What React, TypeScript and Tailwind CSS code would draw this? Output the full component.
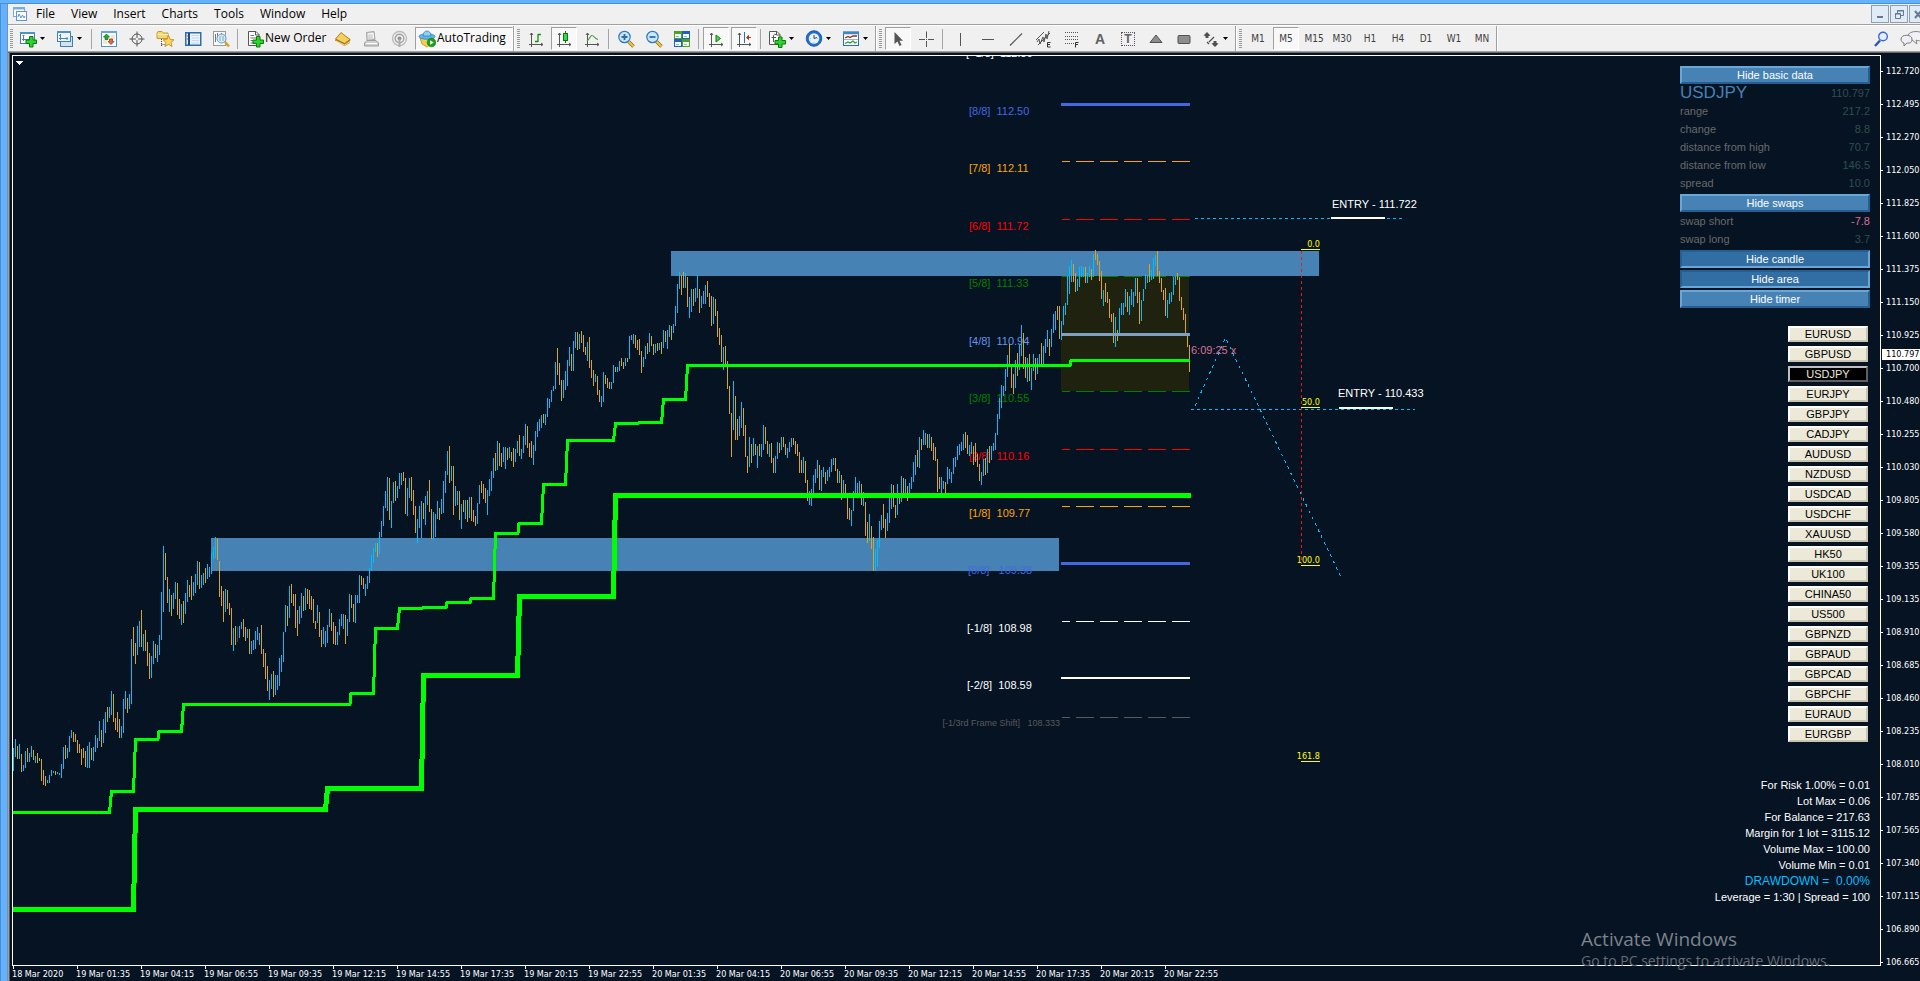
import type { ReactNode } from 'react';

/* ------------------------------------------------------------------ */
/* Chart data                                                          */
/* ------------------------------------------------------------------ */

// Bars are two pixels apart. Each entry is "top-bottom" in thirds of a pixel
// below the segment base, followed by u (up), d (down) or n (neutral).
type Segment = { x: number; base: number; bars: string };

const SEGMENTS: Segment[] = [
  {
    x: 13,
    base: 460,
    bars: `864-933u 837-891u 858-897d 852-897u 882-936d 915-933u 873-924u 864-906d 879-906u 858-891u 870-900d 888-909u
    879-909d 894-903d 897-963d 930-975d 948-978d 960-969u 945-969u 930-948u 933-939u 933-945d 936-942u 939-945u 912-954u
    861-927u 855-897d 864-894u 828-876u 810-834u 816-846d 822-846d 840-879d 852-879d 867-915d 864-894d 873-921d 858-924u
    846-924u 864-900d 861-903u 825-876u 834-864u 783-843u 810-861d 777-849u 756-819u 741-786d 741-774u 693-765u 702-786d
    774-810d 756-816d 777-834d 798-834u 717-819u 693-747u 714-759d 702-747u 537-732u 501-588d 549-612d 498-585u 483-561u
    450-561d 522-573u 510-573d 546-618d 579-657d 588-654u 543-612u 552-594d 555-606u 525-585u 396-540u 258-456u 279-360d
    351-429d 387-456u 405-468d 399-447u 366-417u 369-465d 417-477d 432-495u 423-489d 399-462u 360-426u 375-411d 348-420d
    366-408u 342-399u 303-375u 306-387d 345-384u 339-375u 324-369d 312-357u 321-351u 279-342u 261-297u 231-294u 234-300d
    303-411d 378-438d 393-486d 387-456u 390-447d 429-465d 444-555d 504-573u 498-555d 501-546n 498-534u 486-507u 477-531d
    501-543d 507-534u 507-582d 543-582u 540-570u 513-567u 501-540u 519-555u 495-582d 567-621d 579-657d 618-693d 660-720u
    642-687u 633-711d 645-705u 645-690u 594-678u 585-636u 516-606u 435-516u 438-498d 378-474u 372-429d 402-438d 402-504d
    450-528d 438-492u 399-474u 408-453d 384-450u 387-432d 390-447d 408-450d 417-489d 483-507d 435-489u 456-531d 510-561d
    501-552u 513-561u 495-549u 447-501u 459-513d 486-552d 498-555d 516-555u 477-525u 462-498u 462-507u 465-552d 477-528u
    402-486u 405-444d 432-486d 405-489u 405-429u 345-429u 348-375d 354-387d 372-408u 348-387u 324-369u 285-333u 264-309u
    249-276u 249-291d 216-282u 183-231u 138-198u 93-144u 51-153u 54-180d 123-204u 66-129u 63-123d 78-114u 39-87u 39-75u
    36-63d 54-162d 84-168u 54-114u 51-123d 90-165d 138-219d 177-249u 138-204u 123-234u 129-177d 108-195u 93-135u 60-156d
    147-237d 156-240u 162-231u 123-177u 144-180d 117-162u 63-159u 33-99u`,
  },
  {
    x: 447,
    base: 400,
    bars: `153-225u 138-249d 198-243u 198-345d 258-318u 273-315u 273-360d 312-387u 300-336d 300-357u 300-366d 291-354u
    291-363d 330-366d 348-378d 309-372u 255-312u 243-279d 252-297d 264-309d 270-345u 237-288u 213-273u 174-234u 159-213d
    123-210u 129-198d 159-201d 141-186u 141-207u 144-180d 141-174u 156-183d 144-201d 147-186u 123-159u 105-168d 147-177u
    108-159u 72-135u 78-144d 129-171d 123-174d 135-195u 93-153u 66-111u 57-93u`,
  },
  {
    x: 541,
    base: 230,
    bars: `555-594u 552-579d 552-585u 504-561u 507-534u 480-516u 468-483u 396-477u 354-435d 399-465d 450-513d 450-504u
    423-480u 390-468u 351-408u 372-423d 333-423u 306-354u 306-360d 312-357u 303-339d 315-366d 351-375d 336-393u 321-414d
    390-444d 420-468d 432-456u 438-495d 480-516d 498-531u 426-516u 435-462d 444-474d 456-477d 456-477u 405-459u 411-426d
    411-426u 393-423u 384-408d 396-417d 384-408u 384-396d 318-387u 315-330u 312-342u 315-354d 330-360d 327-375d 363-429d
    381-411u 348-387u 339-372d 309-366u 318-348d 342-375d 342-369u 339-363d 339-360u 336-372d 300-354u 303-336d 300-357u
    285-321u 288-330d 282-309u 228-288u 162-249u 126-177u 135-195d 126-174d 129-174u 141-231d 201-264u 177-246u 177-228d
    174-216u 135-204u 177-249d 198-234u 183-222u 165-222u 153-201d 189-231d 198-288d 201-282u 207-258d 243-321d 294-345d
    315-396d 351-420u 348-405d 393-477d 468-552d 549-681d 453-600u 498-630d 567-630d 558-618u 516-594u 534-618d 585-681d
    678-729d 621-711u 642-699d 624-678u 642-675d 648-714u 642-678d 642-681u 585-660u 591-642d 633-672d 642-681u 639-699d
    684-729d 678-729u 636-687u 639-669d 621-660u 621-651d 642-675d 654-684u 636-666u 624-651u 624-645d 633-672d 642-678d
    666-729d 690-729d 681-729u 693-759d 750-813d 783-825u 777-828u 735-789u 717-759u 690-744u 705-780d 720-783u 711-741u
    726-762d 720-753u 711-741u 687-726u 684-705u 684-723d 717-759d 723-759u 735-810d 750-792u 762-804d 795-867d 834-870d
    840-888u 783-843u 741-789u 759-789u 753-792u 762-825d 786-828u 816-918d 876-939d 852-933u 888-957d 921-1023d 957-1023u
    930-1011u 873-954u 855-900u 822-894d 867-924d 849-903u 798-879u 762-837u 765-831d 825-864d 762-855u 789-822d 738-816u
    744-789d 747-801u 768-813d 759-804u 741-777u 696-756u 675-735u 660-711d 621-714u 627-660d 600-645u 609-645u 612-654d
    612-654u 621-663d 639-690d 651-693d 687-786d 741-777d 741-789u 753-777u 756-789d 711-762u 717-747u 726-759u 684-732u
    681-711u 648-690u 642-675u 636-663u 612-660u 606-654d 615-672d 645-678u 636-672u 648-705d 639-696d 672-711d 702-753d
    726-765u 687-738u 684-735d 657-729u 648-699d 648-690u 639-663u 609-660u 552-615u 504-567u`,
  },
  {
    x: 1001,
    base: 40,
    bars: `1035-1104u 1038-1068u 987-1053u 945-1011u 912-978d 981-1044d 1002-1062d 960-1044u 939-1008d 915-990u 855-948u
    879-987d 951-1014d 954-1026u 942-1023d 984-1050u 942-993u 954-1020d 954-1002u 942-975u 909-978d 918-972u 897-939u
    870-921u 897-948d 867-921u 822-879u 813-870u 798-840d 798-897d 843-900u 798-855u 789-825u 708-795u 678-762u 660-726u
    672-726d 699-756d 717-753u 681-741u 678-711u 681-711u 681-729d 699-729u 678-711u 687-720d 642-711u 630-660d 642-675d
    663-723d 693-777d 750-798u 729-786d 756-789d 777-834d 822-846d 819-909d 831-921u 870-903d 804-879u 789-825u 789-825u
    747-801u 756-816d 768-825u 747-795u 756-801u 714-768u 714-789d 756-852d 780-843u 747-783u 702-747u 705-729u 672-726d
    690-720u 654-717u 645-678u 633-708d 693-729d 714-756d 750-780d 744-828d 780-834u 759-792u 756-786u 711-765u 708-735u
    699-720d 711-783d 771-810d 804-840d 822-888d 885-921d 915-996d`,
  },
];

function barPath(kind: string) {
  let d = '';
  for (const seg of SEGMENTS) {
    seg.bars.split(/\s+/).forEach((bar, i) => {
      if (!bar.endsWith(kind)) return;
      const [top, bottom] = bar.slice(0, -1).split('-').map(Number);
      d += `M${seg.x + i * 2 + 0.5} ${seg.base + top / 3}V${seg.base + bottom / 3}`;
    });
  }
  return d;
}

const FAST_LINE =
  '13,812.5 109.5,812.5 111.5,791.5 133.5,791.5 135.5,739.5 158,739.5 159,731.5 181.5,731.5 183.5,704.5 350,704.5 351,693.5 373.5,693.5 375.5,628.5 397.5,628.5 399.5,608.5 422,608.5 423,607.5 446,607.5 447,602.5 470,602.5 471,598.5 493.5,598.5 495.5,533.5 518,533.5 519,523.5 541.5,523.5 543.5,484.5 565.5,484.5 567.5,440.5 613.5,440.5 615.5,423.5 638,423.5 639,422.5 661.5,422.5 663.5,399.5 685.5,399.5 687.5,365.5 1070,365.5 1071,360.5 1190,360.5';

const SLOW_LINE =
  '13,909.5 133.5,909.5 135.5,809.5 325.5,809.5 327.5,788.5 421.5,788.5 423.5,675.5 517.5,675.5 519.5,596.5 613.5,596.5 615.5,495.5 1191,495.5';

type Level = { label: string; x: number; y: number; textY: number; color: string; width?: number };

const LEVELS: Level[] = [
  { label: '[+1/8]  112.89', x: 966, y: 40, textY: 57, color: '#ffffff' },
  { label: '[8/8]  112.50', x: 969, y: 104.5, textY: 115, color: '#4169e1', width: 3 },
  { label: '[7/8]  112.11', x: 969, y: 161.5, textY: 172, color: '#ffa500' },
  { label: '[6/8]  111.72', x: 969, y: 219.5, textY: 230, color: '#ff0000' },
  { label: '[5/8]  111.33', x: 969, y: 276.5, textY: 287, color: '#008000' },
  { label: '[4/8]  110.94', x: 969, y: 334.5, textY: 345, color: '#6495ed', width: 3 },
  { label: '[3/8]  110.55', x: 969, y: 391.5, textY: 402, color: '#008000' },
  { label: '[2/8]  110.16', x: 969, y: 449.5, textY: 460, color: '#ff0000' },
  { label: '[1/8]  109.77', x: 969, y: 506.5, textY: 517, color: '#ffa500' },
  { label: '[0/8]   109.38', x: 968, y: 563.5, textY: 574, color: '#4169e1', width: 3 },
  { label: '[-1/8]  108.98', x: 967, y: 621.5, textY: 632, color: '#ffffff' },
  { label: '[-2/8]  108.59', x: 967, y: 678, textY: 689, color: '#ffffff', width: 2 },
];

const FIBS = [
  { label: '0.0', y: 249 },
  { label: '50.0', y: 407 },
  { label: '100.0', y: 565 },
  { label: '161.8', y: 761 },
];

function Chart() {
  return (
    <svg className="absolute inset-0 h-full w-full" role="img" aria-label="USDJPY M5 chart">
      <g transform="translate(-13 -56)" shapeRendering="crispEdges" fill="none">
        <rect x="211" y="538" width="848" height="33" fill="#4682b4" />
        <g fontFamily="'Liberation Sans', Arial, sans-serif" fontSize="11" style={{ whiteSpace: 'pre' }}>
          {LEVELS.map((l) => (
            <text key={l.label} x={l.x} y={l.textY} fill={l.color} xmlSpace="preserve">
              {l.label}
            </text>
          ))}
          <text x="1060" y="726" textAnchor="end" fontSize="9" fill="#5a5a5a" xmlSpace="preserve">
            {'[-1/3rd Frame Shift]   108.333'}
          </text>
        </g>
        <rect x="671" y="251" width="648" height="25" fill="#4682b4" />
        <rect x="1061" y="276" width="128" height="115" fill="#1f220e" />
        {LEVELS.slice(1).map((l) => (
          <line
            key={l.label}
            x1={l.width ? 1061 : 1062}
            x2="1190"
            y1={l.y}
            y2={l.y}
            stroke={l.color}
            strokeWidth={l.width ?? 1}
            strokeDasharray={l.width ? undefined : '18 6'}
            strokeDashoffset={l.width ? undefined : 10}
          />
        ))}
        <line x1="1062" x2="1190" y1="717.5" y2="717.5" stroke="#5a5a5a" strokeDasharray="18 6" strokeDashoffset="10" />
        <path d={barPath('u')} stroke="#00bfff" />
        <path d={barPath('d')} stroke="#daa520" />
        <path d={barPath('n')} stroke="#2f4f4f" />
        <line x1="1061" x2="1189" y1="334.5" y2="334.5" stroke="#7f9fc4" strokeWidth="3" />
        <polyline points={FAST_LINE} stroke="#00ff00" strokeWidth="3" />
        <polyline points={SLOW_LINE} stroke="#00ff00" strokeWidth="5" />

        <g stroke="#00bfff">
          <path d="M1195 218.5H1402M1191 409.5H1415" strokeDasharray="3 3" />
          <path d="M1195 406L1225.5 338L1341.5 578" strokeDasharray="3 4" />
        </g>
        <path d="M1301.5 251V564" stroke="#ff1010" strokeDasharray="3 3" />
        <path d="M1331 218H1385M1339 408H1393" stroke="#ffffff" strokeWidth="2" />
        <g fontFamily="'Liberation Sans', Arial, sans-serif" fontSize="11" fill="#ffffff">
          <text x="1332" y="208">ENTRY - 111.722</text>
          <text x="1338" y="397">ENTRY - 110.433</text>
          <text x="1191" y="354" fill="#db7093">6:09:25 x</text>
        </g>
        <g fontFamily="'DejaVu Sans Condensed', 'DejaVu Sans', sans-serif" fontSize="9" fill="#ffff00">
          {FIBS.map((f) => (
            <g key={f.label}>
              <text x="1320" y={f.y - 2} textAnchor="end">
                {f.label}
              </text>
              <path d={`M1301 ${f.y + 0.5}H1320`} stroke="#ffff00" />
            </g>
          ))}
        </g>
        <path d="M16 61H23L19.5 65Z" fill="#ffffff" />
      </g>
    </svg>
  );
}

/* ------------------------------------------------------------------ */
/* Chart overlays                                                      */
/* ------------------------------------------------------------------ */

function PanelButton({ children, pressed }: { children: ReactNode; pressed?: boolean }) {
  return (
    <button
      aria-pressed={pressed}
      className={
        'flex h-[18px] w-full shrink-0 items-center justify-center border-2 text-[11px] leading-none text-white ' +
        (pressed
          ? 'border-t-[#255f92] border-r-[#6aa6d8] border-b-[#6aa6d8] border-l-[#255f92] bg-[#316ea3]'
          : 'border-t-[#6aa6d8] border-r-[#255f92] border-b-[#255f92] border-l-[#6aa6d8] bg-[#4682b4]')
      }
    >
      {children}
    </button>
  );
}

function DataRow({ label, value, red }: { label: string; value: string; red?: boolean }) {
  return (
    <div className="flex h-[18px] items-center justify-between">
      <span className="text-[#696969]">{label}</span>
      <span className={red ? 'text-[#db7093]' : 'text-[#2f4f4f]'}>{value}</span>
    </div>
  );
}

const SYMBOLS = [
  'EURUSD', 'GBPUSD', 'USDJPY', 'EURJPY', 'GBPJPY', 'CADJPY', 'AUDUSD', 'NZDUSD', 'USDCAD', 'USDCHF', 'XAUUSD',
  'HK50', 'UK100', 'CHINA50', 'US500', 'GBPNZD', 'GBPAUD', 'GBPCAD', 'GBPCHF', 'EURAUD', 'EURGBP',
];

function SidePanel() {
  return (
    <div className="relative ml-auto mr-2.5 flex w-[190px] flex-col pt-2.5 text-[11px] leading-none">
      <PanelButton>Hide basic data</PanelButton>
      <div className="flex h-[18px] items-center justify-between">
        <span className="text-[17px] leading-[22px] text-[#4682b4]">USDJPY</span>
        <span className="text-[#2f4f4f]">110.797</span>
      </div>
      <DataRow label="range" value="217.2" />
      <DataRow label="change" value="8.8" />
      <DataRow label="distance from high" value="70.7" />
      <DataRow label="distance from low" value="146.5" />
      <DataRow label="spread" value="10.0" />
      <div className="mt-0.5">
        <PanelButton>Hide swaps</PanelButton>
      </div>
      <DataRow label="swap short" value="-7.8" red />
      <DataRow label="swap long" value="3.7" />
      <div className="mt-0.5 flex flex-col gap-0.5">
        <PanelButton pressed>Hide candle</PanelButton>
        <PanelButton pressed>Hide area</PanelButton>
        <PanelButton>Hide timer</PanelButton>
      </div>
      <div className="mr-0.5 mt-[18px] flex w-20 flex-col gap-1 self-end">
        {SYMBOLS.map((s) => (
          <button
            key={s}
            className={
              'flex h-4 shrink-0 items-center justify-center border-2 text-[11px] leading-none ' +
              (s === 'USDJPY'
                ? 'border-t-[#c0c0c0] border-r-[#606060] border-b-[#606060] border-l-[#c0c0c0] bg-black text-[#ece9d8]'
                : 'border-t-white border-r-[#c8c5b2] border-b-[#c8c5b2] border-l-white bg-[#ece9d8] text-black')
            }
          >
            {s}
          </button>
        ))}
      </div>
      <div className="mt-[35px] flex flex-col items-end whitespace-pre text-[11px] leading-4 text-white">
        <p>For Risk 1.00% = 0.01</p>
        <p>Lot Max = 0.06</p>
        <p>For Balance = 217.63</p>
        <p>Margin for 1 lot = 3115.12</p>
        <p>Volume Max = 100.00</p>
        <p>Volume Min = 0.01</p>
        <p className="text-xs leading-4 text-[#00bfff]">{'DRAWDOWN =  0.00%'}</p>
        <p>Leverage = 1:30 | Spread = 100</p>
      </div>
    </div>
  );
}

/* ------------------------------------------------------------------ */
/* Axes                                                                */
/* ------------------------------------------------------------------ */

const PRICES = [
  '112.720', '112.495', '112.270', '112.050', '111.825', '111.600', '111.375', '111.150', '110.925', '110.700',
  '110.480', '110.255', '110.030', '109.805', '109.580', '109.355', '109.135', '108.910', '108.685', '108.460',
  '108.235', '108.010', '107.785', '107.565', '107.340', '107.115', '106.890', '106.665',
];

const TIMES = [
  '18 Mar 2020', '19 Mar 01:35', '19 Mar 04:15', '19 Mar 06:55', '19 Mar 09:35', '19 Mar 12:15', '19 Mar 14:55',
  '19 Mar 17:35', '19 Mar 20:15', '19 Mar 22:55', '20 Mar 01:35', '20 Mar 04:15', '20 Mar 06:55', '20 Mar 09:35',
  '20 Mar 12:15', '20 Mar 14:55', '20 Mar 17:35', '20 Mar 20:15', '20 Mar 22:55',
];

function PriceAxis() {
  return (
    <div className="relative flex w-[39px] shrink-0 flex-col overflow-hidden font-['DejaVu_Sans_Condensed','DejaVu_Sans',sans-serif] text-[9px] leading-none text-white">
      {PRICES.map((p) => (
        <div key={p} className="flex h-[33px] shrink-0 items-center gap-[3px]">
          <span className="h-px w-0.5 bg-white" />
          {p}
        </div>
      ))}
      <div className="absolute inset-x-0 top-[294px] ml-px flex h-[11px] items-center bg-white pl-1 text-black">
        110.797
      </div>
    </div>
  );
}

function TimeAxis() {
  return (
    <div className="flex h-[15px] shrink-0 overflow-hidden pl-px font-['DejaVu_Sans_Condensed','DejaVu_Sans',sans-serif] text-[9px] leading-none text-white">
      {TIMES.map((t) => (
        <div key={t} className="flex w-16 shrink-0 flex-col whitespace-nowrap">
          <span className="h-[3px] w-px bg-white" />
          <span className="-ml-px pt-px">{t}</span>
        </div>
      ))}
    </div>
  );
}

/* ------------------------------------------------------------------ */
/* Toolbar                                                             */
/* ------------------------------------------------------------------ */

function Icon({ children }: { children: ReactNode }) {
  return (
    <svg width="18" height="18" viewBox="0 0 18 18" fill="none" className="shrink-0" aria-hidden="true">
      {children}
    </svg>
  );
}

function Tool({ label, pressed, children }: { label: string; pressed?: boolean; children: ReactNode }) {
  return (
    <button aria-label={label} title={label} className="flex h-[23px] w-7 shrink-0 items-center justify-center px-px">
      <span
        className={
          'flex h-full w-full items-center justify-center border ' +
          (pressed ? 'border-t-[#a0a0a0] border-r-white border-b-white border-l-[#a0a0a0] bg-[#f8f8f8]' : 'border-transparent')
        }
      >
        {children}
      </span>
    </button>
  );
}

function MenuTool({ label, children }: { label: string; children: ReactNode }) {
  return (
    <button aria-label={label} className="flex h-[23px] w-[37px] shrink-0 items-center gap-[3px] pl-1">
      {children}
      <svg width="5" height="3" viewBox="0 0 5 3" className="shrink-0" aria-hidden="true">
        <path d="M0 0H5L2.5 3Z" fill="#000" />
      </svg>
    </button>
  );
}

const Sep = () => <span className="ml-0.5 mr-[3px] h-5 w-px shrink-0 bg-[#a5a5a5]" />;

const BandEnd = () => <span className="h-full w-0.5 shrink-0 border-r border-white bg-[#a0a0a0]" />;

const Grip = () => (
  <svg width="3" height="20" viewBox="0 0 3 20" className="mx-0.5 shrink-0" aria-hidden="true">
    <path d="M1.5 0V20" stroke="#9a9a9a" strokeWidth="3" strokeDasharray="1 1" />
  </svg>
);

const Plus = () => (
  <path d="M10.5 7.5H14V11H17.5V14.5H14V18H10.5V14.5H7V11H10.5Z" fill="#2bd52b" stroke="#0b7a0b" strokeWidth="1" />
);

const Axes = () => (
  <path d="M4.5 3V17M2 14.5H16M3 5L4.5 3L6 5M14 13L16 14.5L14 16" stroke="#555" strokeWidth="1" />
);

function Toolbar() {
  return (
    <div className="flex h-[26px] shrink-0 items-center border-t border-white bg-[#f0f0f0] text-xs text-black">
      <Grip />
      <MenuTool label="New Chart">
        <Icon>
          <rect x="1.5" y="2.5" width="14" height="11" fill="#fff" stroke="#3f7fb5" />
          <path d="M1 3H16" stroke="#4b93cf" strokeWidth="2" />
          <path d="M4.5 5V11M3 9.5H10M3.500 6L4.5 5L5.500 6" stroke="#5580a8" />
          <g transform="translate(0 -1)"><Plus /></g>
        </Icon>
      </MenuTool>
      <MenuTool label="Profiles">
        <Icon>
          <rect x="4.500" y="6.500" width="12" height="10" fill="#cfe5f7" stroke="#3f7fb5" />
          <rect x="1.500" y="1.500" width="13" height="10" fill="#eef7ff" stroke="#3f7fb5" />
          <path d="M1 2H15" stroke="#4b93cf" strokeWidth="2" />
          <path d="M4.500 4V10M3 5.500H5M3 8.500H12M11 7V10" stroke="#5580a8" />
        </Icon>
      </MenuTool>
      <Sep />
      <Tool label="Market Watch">
        <Icon>
          <rect x="1.500" y="1.500" width="15" height="15" fill="#fff" stroke="#4b93cf" />
          <path d="M1 2H17" stroke="#63a7e0" strokeWidth="2" />
          <path d="M11 6H15M11 8H15M3 11H7M3 13H7" stroke="#cfcfcf" />
          <path d="M6.500 4L9.500 7H8V9.500H5V7H3.500Z" fill="#20b020" stroke="#0c6e0c" strokeWidth=".7" />
          <path d="M11 14.500L14 11.500H12.500V9H9.500V11.500H8Z" fill="#e8643a" stroke="#9d2c10" strokeWidth=".7" />
        </Icon>
      </Tool>
      <Tool label="Data Window">
        <Icon>
          <circle cx="9" cy="9" r="5" stroke="#555" />
          <path d="M9 1.500V16.500M1.500 9H16.500" stroke="#555" />
          <rect x="8" y="8" width="2" height="2" fill="#f0f0f0" />
        </Icon>
      </Tool>
      <Tool label="Navigator">
        <Icon>
          <path d="M1 3L2 1.500H6L7.500 3H12V8.500H1Z" fill="#f7d96b" stroke="#b88a1a" strokeWidth=".8" />
          <path d="M1.500 4.500H12" stroke="#fff3b8" />
          <path d="M5.500 9V17M5.500 14.500H9" stroke="#444" strokeDasharray="1 1" />
          <path d="M12.500 5.500L14.200 9.500L18 9.800L15 12.400L16 16.500L12.500 14.300L9 16.500L10 12.400L7 9.800L10.800 9.500Z" fill="#fbd85c" stroke="#b98412" strokeWidth=".8" />
        </Icon>
      </Tool>
      <Tool label="Terminal">
        <Icon>
          <rect x="1.750" y="2.750" width="15" height="12.500" fill="#eaf4fd" stroke="#2c6fb0" strokeWidth="1.500" />
          <path d="M5 3V15" stroke="#1d4e86" strokeWidth="2" />
          <path d="M7.500 5.500H15M7.500 8H15M7.500 10.500H15M7.500 13H15" stroke="#c8d8e6" />
          <path d="M3 6H4M3 9H4" stroke="#e33" />
        </Icon>
      </Tool>
      <Tool label="Strategy Tester">
        <Icon>
          <rect x="1.500" y="1.500" width="12" height="14" fill="#fafafa" stroke="#9a9a9a" />
          <path d="M3.500 4V12M5.500 3V8M9.500 3V7M11.500 5V9" stroke="#777" />
          <circle cx="9.500" cy="8.500" r="4.500" fill="#d6ebfb" fillOpacity=".9" stroke="#5f9cd0" />
          <path d="M8 6V11M11 6V11" stroke="#8aa" />
          <path d="M13 12L17 16.500" stroke="#d6a02a" strokeWidth="2.500" />
        </Icon>
      </Tool>
      <Sep />
      <button className="flex h-[23px] w-[88px] shrink-0 items-center whitespace-nowrap pl-[5px]">
        <Icon>
          <path d="M2.500 1.500H10L13 4.500V15.500H2.500Z" fill="#fff" stroke="#555" />
          <path d="M9.500 1.500V5H13" stroke="#555" />
          <path d="M4.500 5.500H8M4.500 8H11M4.500 10.500H8M4.500 13H8" stroke="#777" />
          <g transform="translate(0 -1)"><Plus /></g>
        </Icon>
        <span className="-mt-0.5 pl-px">New Order</span>
      </button>
      <Tool label="MetaEditor">
        <Icon>
          <path d="M7 3L16.500 9.500L15.500 13L10.500 16L1 10.500L2 8.500Z" fill="#b5780f" />
          <path d="M7 2.500L16 9.500L10.500 13.500L1.500 9Z" fill="#f3cf62" stroke="#a86d10" strokeWidth=".8" />
          <path d="M2 11L10.500 15L16 11.500" stroke="#fff2c0" strokeWidth=".8" />
        </Icon>
      </Tool>
      <Tool label="MQL5 Market">
        <Icon>
          <path d="M4.500 2.500L12 1.500L13 9.500L5 10.500Z" fill="#d8d8d8" stroke="#a2a2a2" />
          <path d="M6 4L11 3.500L11.500 8" stroke="#fff" />
          <path d="M2.500 13L5 10.500H14L16.500 13V16H2.500Z" fill="#cfcfcf" stroke="#9c9c9c" />
          <path d="M4 13.500H15" stroke="#fff" />
        </Icon>
      </Tool>
      <Tool label="Signals">
        <Icon>
          <circle cx="9.500" cy="8.500" r="7" stroke="#bcbcbc" strokeWidth="1.400" />
          <circle cx="9.500" cy="8.500" r="4.300" stroke="#a2a2a2" strokeWidth="1.400" />
          <circle cx="9.500" cy="8.500" r="2" fill="#8f8f8f" />
          <path d="M9.500 9V17" stroke="#acacac" strokeWidth="2" />
        </Icon>
      </Tool>
      <button
        aria-pressed="true"
        className="ml-0.5 flex h-[23px] w-[98px] shrink-0 items-center whitespace-nowrap border border-t-[#a0a0a0] border-r-white border-b-white border-l-[#a0a0a0] bg-[#f8f8f8] pl-0.5"
      >
        <Icon>
          <path d="M2 8L16 7L13 14L9 17L4 14Z" fill="#f2d04e" stroke="#c0921e" strokeWidth=".8" />
          <ellipse cx="9" cy="6.500" rx="8" ry="2.800" fill="#62b5e8" stroke="#2f83bd" strokeWidth=".8" />
          <path d="M5 6C5 2.500 7 1 9 1S13 2.500 13 6Z" fill="#8fd0f5" stroke="#2f83bd" strokeWidth=".8" />
          <circle cx="13.500" cy="12.500" r="4.300" fill="#19a319" stroke="#0b780b" strokeWidth=".6" />
          <path d="M12.200 10.300L15.700 12.500L12.200 14.700Z" fill="#fff" />
        </Icon>
        <span className="-mt-0.5 pl-px">AutoTrading</span>
      </button>
      <BandEnd />
      <Grip />
      <Tool label="Bar Chart">
        <Icon>
          <Axes />
          <path d="M11 4V12M11 4.500H14M8 11.500H11" stroke="#159015" strokeWidth="1.300" />
        </Icon>
      </Tool>
      <Tool label="Candlesticks" pressed>
        <Icon>
          <Axes />
          <path d="M10.500 1V13" stroke="#0b7a0b" />
          <rect x="8.500" y="3.500" width="4" height="7" fill="#35d84c" stroke="#0b7a0b" />
        </Icon>
      </Tool>
      <Tool label="Line Chart">
        <Icon>
          <Axes />
          <path d="M4 11C7 9 7 5.500 9 5.500S12 9 15 9.500" stroke="#4a9e4a" strokeWidth="1.200" />
        </Icon>
      </Tool>
      <Sep />
      <Tool label="Zoom In">
        <Icon>
          <path d="M11.500 11.500L16.500 16.500" stroke="#8f6a10" strokeWidth="3.400" />
          <path d="M11.500 11.500L16.500 16.500" stroke="#f0c840" strokeWidth="2" />
          <circle cx="7.500" cy="7" r="5.700" fill="#c9e6fb" stroke="#2c78bd" strokeWidth="1.200" />
          <path d="M4.500 7H10.500M7.500 4V10" stroke="#2c6ca5" strokeWidth="1.800" />
        </Icon>
      </Tool>
      <Tool label="Zoom Out">
        <Icon>
          <path d="M11.500 11.500L16.500 16.500" stroke="#8f6a10" strokeWidth="3.400" />
          <path d="M11.500 11.500L16.500 16.500" stroke="#f0c840" strokeWidth="2" />
          <circle cx="7.500" cy="7" r="5.700" fill="#c9e6fb" stroke="#2c78bd" strokeWidth="1.200" />
          <path d="M4.500 7H10.500" stroke="#2c6ca5" strokeWidth="1.800" />
        </Icon>
      </Tool>
      <Tool label="Tile Windows">
        <Icon>
          <path d="M1 1H9V9H1ZM9 9H17V17H9Z" fill="#4aa31e" />
          <path d="M9 1H17V9H9ZM1 9H9V17H1Z" fill="#1f5fc4" />
          <path d="M2 4H8V8H2ZM10 4H16V8H10ZM2 12H8V16H2ZM10 12H16V16H10Z" fill="#f4faff" />
          <path d="M3 6.500H6M11 6.500H14M3 14.500H6M11 14.500H14" stroke="#9ab8a0" />
        </Icon>
      </Tool>
      <Sep />
      <Tool label="Auto Scroll" pressed>
        <Icon>
          <Axes />
          <path d="M9 5L13.500 8.500L9 12Z" fill="#4bd04b" stroke="#138013" />
        </Icon>
      </Tool>
      <Tool label="Chart Shift" pressed>
        <Icon>
          <Axes />
          <path d="M9.500 2V13" stroke="#2c6fb0" />
          <path d="M16 7.500H12M13.500 5.500L11.500 7.500L13.500 9.500Z" stroke="#b33a10" fill="#b33a10" />
        </Icon>
      </Tool>
      <Sep />
      <MenuTool label="Indicators">
        <Icon>
          <path d="M1.500 1.500H9L12 4.500V14.500H1.500Z" fill="#fff" stroke="#555" />
          <path d="M8.500 1.500V5H12" stroke="#555" />
          <path d="M8 4.500C5.500 3.500 5.500 5.500 5.500 7V12M3.500 7.500H8" stroke="#555" />
          <g transform="translate(0 -.5)"><Plus /></g>
        </Icon>
      </MenuTool>
      <MenuTool label="Periods">
        <Icon>
          <circle cx="9" cy="8.500" r="7.800" fill="#1f6fd1" stroke="#124c96" strokeWidth=".8" />
          <circle cx="9" cy="8.500" r="5.200" fill="#e8f3fd" />
          <path d="M9 5V8.500L12 7.500" stroke="#345" />
          <path d="M9 12.500V13M5 8.500H5.500M12.500 8.500H13" stroke="#789" />
        </Icon>
      </MenuTool>
      <MenuTool label="Templates">
        <Icon>
          <rect x="1.500" y="2" width="15" height="13.500" fill="#fff" stroke="#2c6fb0" />
          <path d="M1 3H17" stroke="#3d86cc" strokeWidth="2.500" />
          <path d="M3 8L6 6.500L8 7.500L11 6H15" stroke="#8c2f10" strokeWidth="1.300" />
          <path d="M2 9.500H16" stroke="#8fb4d8" />
          <path d="M3 13.500L6 12L8 13L11 11L13 13L15 12" stroke="#2a9a3a" strokeWidth="1.200" />
        </Icon>
      </MenuTool>
      <BandEnd />
      <Grip />
      <Tool label="Cursor" pressed>
        <Icon>
          <path d="M5.500 2V14L8.500 11.500L10.500 16L12.500 15L10.500 10.800H14Z" fill="#555" />
        </Icon>
      </Tool>
      <Tool label="Crosshair">
        <Icon>
          <path d="M9.500 1.500V8M9.500 11V17M2 9.500H8M11 9.500H17M9 9.500H10" stroke="#555" />
        </Icon>
      </Tool>
      <Sep />
      <Tool label="Vertical Line">
        <Icon><path d="M9.500 3V16" stroke="#555" /></Icon>
      </Tool>
      <Tool label="Horizontal Line">
        <Icon><path d="M3 9.500H15" stroke="#555" /></Icon>
      </Tool>
      <Tool label="Trendline">
        <Icon><path d="M3 15.500L15 3.500" stroke="#555" strokeWidth="1.200" /></Icon>
      </Tool>
      <Tool label="Equidistant Channel">
        <Icon>
          <path d="M1 10L9 2M3 15L15 3M2 12L4 9L5 14L8 7L9 12L11 4L12 9L14 1" stroke="#555" />
          <path d="M15.500 12.500H12.500V17H15.500M12.500 14.500H15" stroke="#333" />
        </Icon>
      </Tool>
      <Tool label="Fibonacci Retracement">
        <Icon>
          <path d="M2 2.500H16M2 6.500H16M2 9.500H16M2 13.500H11" stroke="#555" strokeDasharray="1 1" />
          <path d="M12.500 17.500V12.500H15.500M12.500 14.500H15" stroke="#333" />
        </Icon>
      </Tool>
      <Tool label="Text"><span className="font-['Liberation_Sans'] text-sm font-bold leading-none text-[#606060]">A</span></Tool>
      <Tool label="Text Label">
        <span className="flex h-3.5 w-3.5 items-center justify-center border border-dotted border-[#555] font-['Liberation_Sans'] text-xs font-bold leading-none text-[#606060]">
          T
        </span>
      </Tool>
      <Tool label="Triangle">
        <Icon><path d="M9 5L15 12.500H3Z" fill="#8d8d8d" stroke="#505050" /></Icon>
      </Tool>
      <Tool label="Rectangle">
        <Icon><rect x="3" y="5.500" width="12" height="8" rx="1" fill="#8d8d8d" stroke="#505050" /></Icon>
      </Tool>
      <MenuTool label="Arrows">
        <Icon>
          <path d="M5 2L8.500 5.500L6.500 6V8H3.500V6L1.500 5.500Z" fill="#505050" />
          <path d="M13 17L9.500 13.500L11.500 13V11H14.500V13L16.500 13.500Z" fill="#505050" />
          <path d="M5 12L7 14M7 12L12 7" stroke="#505050" strokeWidth="1.300" />
        </Icon>
      </MenuTool>
      <BandEnd />
      <Grip />
      {['M1', 'M5', 'M15', 'M30', 'H1', 'H4', 'D1', 'W1', 'MN'].map((t) => (
        <Tool key={t} label={t} pressed={t === 'M5'}>
          <span className="font-['DejaVu_Sans_Condensed','DejaVu_Sans',sans-serif] text-[10px] leading-none text-[#404040]">{t}</span>
        </Tool>
      ))}
      <BandEnd />
      <div className="ml-auto flex h-full items-center gap-2.5 overflow-hidden">
        <button aria-label="Search">
          <Icon>
            <path d="M3 16L8 10.500" stroke="#2a55c0" strokeWidth="2.400" />
            <circle cx="11" cy="6.500" r="4.300" fill="#e4f0ff" stroke="#3a6ad4" strokeWidth="1.400" />
          </Icon>
        </button>
        <button aria-label="Chat" className="w-5 overflow-hidden">
          <svg width="26" height="18" viewBox="0 0 26 18" fill="none" aria-hidden="true">
            <path d="M8 6C8 0 24 0 24 6S18 11 16 10L17 14L12 10Z" fill="#f2f2f6" stroke="#888" />
            <path d="M1 9C1 4 12 4 12 9S8 13 7 13L4 16V13C2 12.500 1 11 1 9Z" fill="#eeeef6" stroke="#777" />
          </svg>
        </button>
      </div>
    </div>
  );
}

function MenuBar() {
  return (
    <div className="flex h-5 shrink-0 items-center bg-[#f0f0f0] pl-[5px] text-xs text-black">
      <svg width="14" height="14" viewBox="0 0 14 14" fill="none" className="shrink-0" aria-hidden="true">
        <rect x=".5" y=".5" width="11" height="9" fill="#fff" stroke="#78abe0" />
        <path d="M0 1.500H12" stroke="#78abe0" strokeWidth="2" />
        <rect x="3.500" y="4.500" width="10" height="9" fill="#fff" stroke="#5d96d8" />
        <path d="M5 10L6 7L8 11L9.500 8L11 11L12 9" stroke="#5d96d8" />
      </svg>
      <nav className="ml-[9px] flex gap-4">
        {['File', 'View', 'Insert', 'Charts', 'Tools', 'Window', 'Help'].map((m) => (
          <a key={m} href="#" className="leading-4">
            {m}
          </a>
        ))}
      </nav>
      <div className="ml-auto flex h-[18px] gap-px">
        <button aria-label="Minimize" className="w-[18px] border border-[#8f9fb2] bg-[#dfebf7]">
          <svg width="16" height="16" viewBox="0 0 16 16" aria-hidden="true"><path d="M5 10H11V12H5Z" fill="#66788f" /></svg>
        </button>
        <button aria-label="Restore" className="w-[18px] border border-[#8f9fb2] bg-[#dfebf7]">
          <svg width="16" height="16" viewBox="0 0 16 16" fill="none" stroke="#66788f" aria-hidden="true">
            <path d="M6.500 7V4.500H12.500V9.500H10M6 5H13" />
            <path d="M4.500 7.500H9.500V12.500H4.500ZM4 8H10" />
          </svg>
        </button>
        <button aria-label="Close" className="w-[11px] overflow-hidden border border-r-0 border-[#8f9fb2] bg-[#dfebf7]">
          <svg width="16" height="16" viewBox="0 0 16 16" fill="none" aria-hidden="true">
            <path d="M5 5L11 12M11 5L5 12" stroke="#66788f" strokeWidth="2" />
          </svg>
        </button>
      </div>
    </div>
  );
}

/* ------------------------------------------------------------------ */
/* Page                                                                */
/* ------------------------------------------------------------------ */

export default function App() {
  return (
    <div className="flex h-screen w-full flex-col overflow-hidden bg-[#061323] font-['Open_Sans','Noto_Sans',sans-serif]">
      <div className="h-1 shrink-0 border-b border-[#4a90d0] bg-[#63b1ff]" />
      <div className="flex min-h-0 flex-1">
        <div className="w-2 shrink-0 border-x border-r-[#6f94bb] border-l-[#4a90d0] bg-[#63b1ff]" />
        <div className="flex min-w-0 flex-1 flex-col">
          <MenuBar />
          <div className="h-px shrink-0 bg-[#a0a0a0]" />
          <Toolbar />
          <div className="h-0.5 shrink-0 border-t border-[#a0a0a0] bg-[#696969]" />
          <main className="flex min-h-0 flex-1 border-l border-[#a0a0a0] font-['Liberation_Sans',Arial,sans-serif]">
            <div className="flex min-w-0 flex-1 border-l border-[#595959] pl-0.5 pt-0.5">
              <div className="flex min-w-0 flex-1 flex-col">
                <div className="relative flex min-h-0 flex-1 border border-white">
                  <div className="absolute inset-0 overflow-hidden">
                    <Chart />
                  </div>
                  <SidePanel />
                  <div className="pointer-events-none absolute -bottom-1.5 right-[43px] w-[256px] whitespace-nowrap font-['Open_Sans','Noto_Sans',sans-serif] text-[#7d838b]">
                    <p className="text-[19px] leading-6">Activate Windows</p>
                    <p className="text-sm leading-5 text-[#666c75]">Go to PC settings to activate Windows.</p>
                  </div>
                </div>
                <TimeAxis />
              </div>
              <PriceAxis />
            </div>
          </main>
        </div>
      </div>
    </div>
  );
}
